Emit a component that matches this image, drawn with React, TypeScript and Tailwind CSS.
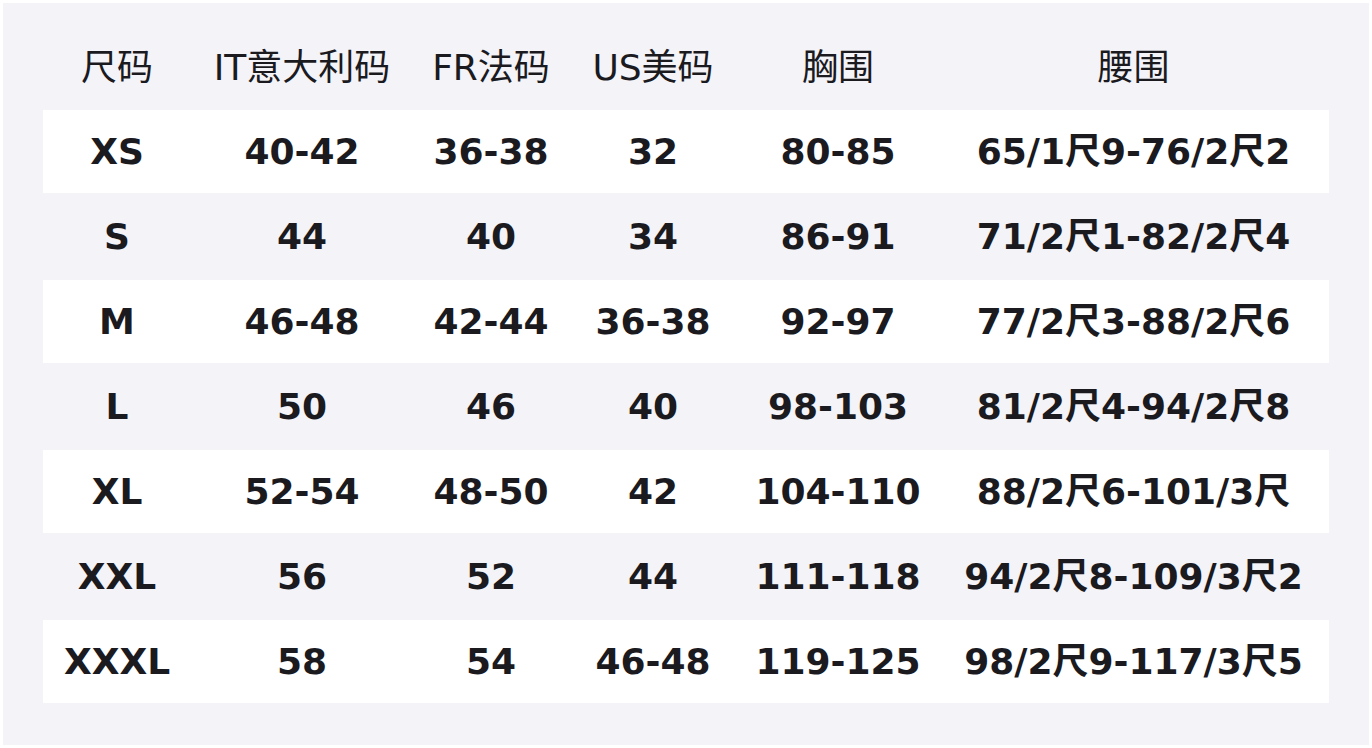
const headers = ["尺码", "IT意大利码", "FR法码", "US美码", "胸围", "腰围"];

const rows: string[][] = [
  ["XS", "40-42", "36-38", "32", "80-85", "65/1尺9-76/2尺2"],
  ["S", "44", "40", "34", "86-91", "71/2尺1-82/2尺4"],
  ["M", "46-48", "42-44", "36-38", "92-97", "77/2尺3-88/2尺6"],
  ["L", "50", "46", "40", "98-103", "81/2尺4-94/2尺8"],
  ["XL", "52-54", "48-50", "42", "104-110", "88/2尺6-101/3尺"],
  ["XXL", "56", "52", "44", "111-118", "94/2尺8-109/3尺2"],
  ["XXXL", "58", "54", "46-48", "119-125", "98/2尺9-117/3尺5"],
];

const grid = "grid grid-cols-[148px_222px_156px_168px_202px_389px]";

export default function App() {
  return (
    <div className="min-h-screen bg-white p-[3px] font-['DejaVu_Sans','Noto_Sans_CJK_SC',sans-serif] text-[#1a1a1f]">
      <div className="h-[742px] bg-[#f3f3f8] px-10 pt-[22px]">
        <div className={`${grid} h-[85px] text-[36px]`}>
          {headers.map((h) => (
            <div key={h} className="flex items-center justify-center whitespace-nowrap">
              {h}
            </div>
          ))}
        </div>
        {rows.map((r, i) => (
          <div
            key={r[0]}
            className={`${grid} text-[36px] font-bold ${
              i % 2 === 0 ? "h-[83px] bg-white" : "h-[87px]"
            }`}
          >
            {r.map((c, j) => (
              <div key={j} className="flex items-center justify-center whitespace-nowrap">
                {c}
              </div>
            ))}
          </div>
        ))}
      </div>
    </div>
  );
}
